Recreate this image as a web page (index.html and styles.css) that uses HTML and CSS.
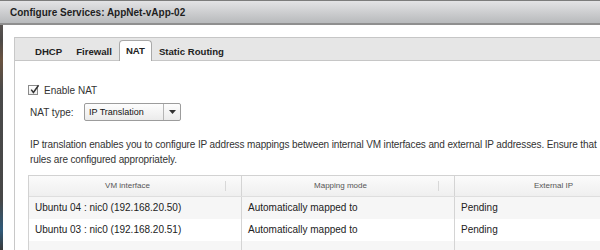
FILE: index.html
```html
<!DOCTYPE html>
<html>
<head>
<meta charset="utf-8">
<link rel="stylesheet" href="styles.css">
</head>
<body>
<div class="titlebar">Configure Services: AppNet-vApp-02</div>
<div class="dialog">
  <div class="panel">
    <div class="tabs">
      <div class="tab">DHCP</div>
      <div class="tab">Firewall</div>
      <div class="tab active">NAT</div>
      <div class="tab">Static Routing</div>
    </div>
    <div class="content">
      <label class="check-row">
        <span class="checkbox">
          <svg width="11" height="11" viewBox="0 0 11 11"><path d="M2.2 5.6 L4.4 8.4 L9.6 1.2" fill="none" stroke="#333" stroke-width="1.5"/></svg>
        </span>
        Enable NAT
      </label>
      <div class="type-row">
        <span class="type-label">NAT type:</span>
        <div class="select">
          <span class="select-value">IP Translation</span>
          <span class="select-btn"><svg width="7" height="4" viewBox="0 0 7 4"><path d="M0 0 H7 L3.5 4 Z" fill="#333"/></svg></span>
        </div>
      </div>
      <p class="desc">IP translation enables you to configure IP address mappings between internal VM interfaces and external IP addresses. Ensure that rules are configured appropriately.</p>
      <div class="grid">
        <div class="row head">
          <div class="cell">VM interface</div>
          <div class="cell">Mapping mode</div>
          <div class="cell">External IP</div>
        </div>
        <div class="row odd">
          <div class="cell">Ubuntu 04 : nic0 (192.168.20.50)</div>
          <div class="cell">Automatically mapped to</div>
          <div class="cell">Pending</div>
        </div>
        <div class="row">
          <div class="cell">Ubuntu 03 : nic0 (192.168.20.51)</div>
          <div class="cell">Automatically mapped to</div>
          <div class="cell">Pending</div>
        </div>
        <div class="row odd">
          <div class="cell"></div>
          <div class="cell"></div>
          <div class="cell"></div>
        </div>
      </div>
    </div>
  </div>
</div>
</body>
</html>
```
FILE: styles.css
```css
html, body {
  margin: 0;
  padding: 0;
}
body {
  width: 600px;
  height: 250px;
  overflow: hidden;
  font-family: "Liberation Sans", Arial, Helvetica, sans-serif;
  color: #333;
  background: linear-gradient(#6b6460 0px, #4d4a48 40px, #6a5340 60px, #4a4a4a 90px, #474747 200px, #2f5a7a 230px, #3a3a3a 250px);
}
.titlebar {
  height: 22px;
  border-top: 1px solid #7c7c7c;
  border-bottom: 2px solid #8f8f8f;
  background: linear-gradient(#e3e3e5, #b8babc);
  font-size: 10px;
  font-weight: bold;
  color: #1e1e1e;
  line-height: 24px;
  padding-left: 10px;
  white-space: nowrap;
}
.dialog {
  margin-left: 3px;
  background: #fff;
  height: 225px;
  padding: 12px 0 0 11px;
  box-sizing: border-box;
}
.panel {
  border-left: 1px solid #c8c8c8;
  height: 100%;
}
.tabs {
  height: 22px;
  background: #e6e6e6;
  border-top: 1px solid #c6c6c6;
  border-bottom: 1px solid #c6c6c6;
  display: flex;
  align-items: flex-end;
  padding-left: 13px;
}
.tab {
  font-size: 9.6px;
  font-weight: bold;
  color: #222;
  padding: 0 6px;
  height: 19px;
  line-height: 19px;
  margin-bottom: -1px;
  border: 1px solid transparent;
  border-bottom: none;
}
.tab.active {
  background: #fff;
  border-color: #a9a9a9;
  border-radius: 4px 4px 0 0;
  height: 20px;
}
.content {
  padding: 21px 0 0 13px;
  font-size: 10px;
  color: #333;
}
.check-row {
  display: flex;
  align-items: center;
  gap: 6px;
  height: 14px;
  margin-top: 1px;
}
.checkbox {
  width: 8px;
  height: 8px;
  border: 1px solid #8a8a8a;
  background: linear-gradient(#fff, #eee);
  position: relative;
}
.checkbox svg {
  position: absolute;
  left: 0;
  top: -2px;
}
.type-row {
  display: flex;
  align-items: center;
  margin-top: 6px;
  padding-left: 2px;
}
.type-label {
  width: 54px;
}
.select {
  display: flex;
  width: 97px;
  height: 18px;
  border: 1px solid #9c9c9c;
  border-radius: 2px;
  background: linear-gradient(#fdfdfd, #ebebeb);
  box-sizing: border-box;
}
.select-value {
  flex: 1;
  font-size: 9px;
  color: #111;
  line-height: 16px;
  padding-left: 4px;
}
.select-btn {
  width: 16px;
  border-left: 1px solid #b5b5b5;
  display: flex;
  align-items: center;
  justify-content: center;
}
.desc {
  margin: 16px 0 0 2px;
  width: 570px;
  font-size: 10px;
  letter-spacing: -0.12px;
  line-height: 15px;
  color: #333;
}
.grid {
  margin-top: 8px;
  width: 660px;
  border: 1px solid #d2d2d2;
  border-right: none;
}
.row {
  display: grid;
  grid-template-columns: 213px 213px 213px;
  height: 22px;
}
.row.odd {
  background: #f6f6f6;
}
.row .cell {
  border-right: 1px solid #d4d4d4;
  padding-left: 6px;
  line-height: 22px;
  font-size: 10px;
  color: #222;
  white-space: nowrap;
}
.row.head {
  background: linear-gradient(#fbfbfb, #efefef);
  border-bottom: 1px solid #dedede;
  height: 20px;
}
.row.head .cell {
  font-size: 8px;
  color: #555;
  line-height: 20px;
  text-align: center;
  padding: 0 15px 0 0;
  position: relative;
}
.row.head .cell::after {
  content: "";
  position: absolute;
  right: 15px;
  top: 5px;
  height: 10px;
  border-left: 1px solid #d8d8d8;
}
```
